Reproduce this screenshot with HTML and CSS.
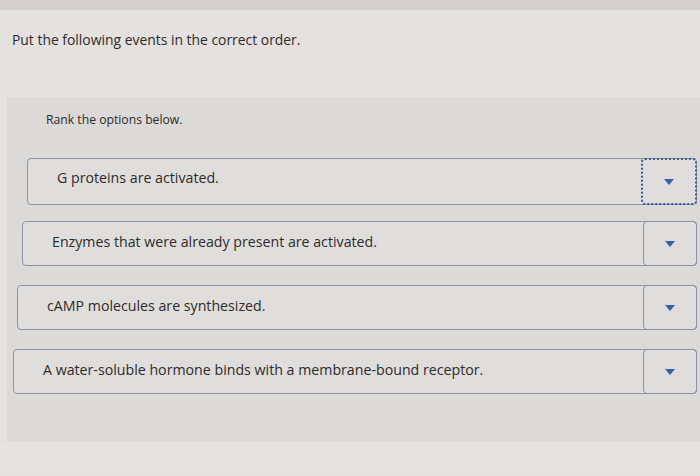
FILE: index.html
```html
<!DOCTYPE html>
<html lang="en">
<head>
    <meta charset="UTF-8">
    <meta name="viewport" content="width=device-width, initial-scale=1.0">
    <title>Ranking Question</title>
    <link rel="stylesheet" href="styles.css">
</head>
<body>
    <div class="top-strip"></div>
    <div class="prompt">Put the following events in the correct order.</div>

    <div class="question">
        <div class="instructions">Rank the options below.</div>

        <div class="rank-list">
            <div class="rank-row row-1">
                <div class="rank-text">G proteins are activated.</div>
                <div class="rank-select focused"><span class="caret"></span></div>
            </div>
            <div class="rank-row row-2">
                <div class="rank-text">Enzymes that were already present are activated.</div>
                <div class="rank-select"><span class="caret"></span></div>
            </div>
            <div class="rank-row row-3">
                <div class="rank-text">cAMP molecules are synthesized.</div>
                <div class="rank-select"><span class="caret"></span></div>
            </div>
            <div class="rank-row row-4">
                <div class="rank-text">A water-soluble hormone binds with a membrane-bound receptor.</div>
                <div class="rank-select"><span class="caret"></span></div>
            </div>
        </div>
    </div>
    <div class="bottom-strip"></div>
</body>
</html>
```

FILE: styles.css
```css
body {
    margin: 0;
    font-family: "Open Sans", Lato, Arial, sans-serif;
    color: #2e2b2a;
    background-color: #e4e1df;
    overflow: hidden;
}
.top-strip {
    height: 10px;
    background-color: #d4cfcd;
}
.prompt {
    font-size: 13.9px;
    padding: 20px 0 0 12px;
    height: 67px;
}
.question {
    margin-left: 7px;
    background-color: #dcdad8;
    height: 345px;
    padding-top: 14px;
    box-sizing: border-box;
}
.instructions {
    font-size: 12.2px;
    padding-left: 39px;
    height: 47px;
}
.rank-list {
    display: flex;
    flex-direction: column;
    gap: 18px;
}
.rank-row {
    display: flex;
    height: 43px;
    border: 1px solid #8c93a6;
    border-radius: 4px;
    margin-right: 3px;
    background-color: #e0dedc;
}
.row-1 { margin-left: 20px; height: 45px; margin-bottom: -2px; }
.row-2 { margin-left: 15px; }
.row-3 { margin-left: 10px; margin-top: 1px; }
.row-4 { margin-left: 6px; margin-top: 1px; }
.rank-text {
    flex: 1;
    display: flex;
    align-items: center;
    padding: 0 0 5px 29px;
    font-size: 14.2px;
}
.row-1 .rank-text { padding-bottom: 9px; }
.row-4 .rank-text { padding-bottom: 4px; }
.rank-select {
    width: 52px;
    margin: -1px -1px -1px 0;
    border: 1px solid #8c93a6;
    border-radius: 4px;
    display: flex;
    align-items: center;
    justify-content: center;
}
.rank-select.focused {
    border: 2px dotted #3f5d9c;
}
.caret {
    width: 0;
    height: 0;
    border-left: 5px solid transparent;
    border-right: 5px solid transparent;
    border-top: 6px solid #3a5ea8;
}
.bottom-strip {
    height: 31px;
    background-color: #e6e4e1;
}
```
